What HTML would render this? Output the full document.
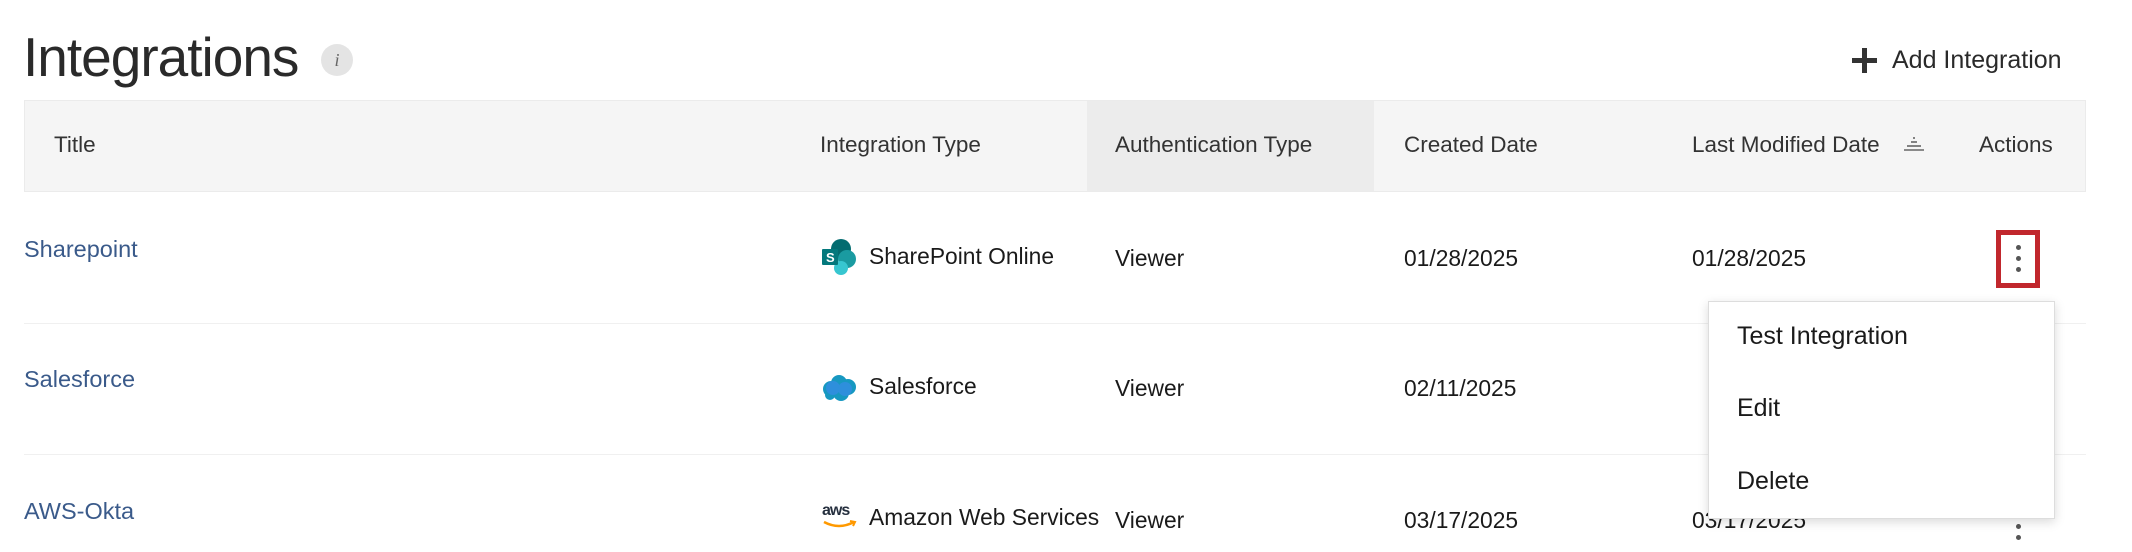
<!DOCTYPE html>
<html><head><meta charset="utf-8"><style>
*{margin:0;padding:0;box-sizing:border-box}
body{width:2132px;height:552px;background:#fff;font-family:"Liberation Sans",sans-serif;color:#222;position:relative;overflow:hidden}
.a{position:absolute;white-space:nowrap}
.h{font-size:22.5px;color:#333;top:132px}
.c{font-size:22.8px;color:#1a1a1a}
.l{font-size:23.5px;color:#3a5a8a}
.m{font-size:25px;color:#1a1a1a;left:1737px}
</style></head><body>
<div class="a" style="left:23px;top:25px;font-size:55px;color:#2a2a2a;letter-spacing:-1px">Integrations</div>
<div class="a" style="left:321px;top:44px;width:32px;height:32px;border-radius:50%;background:#e4e4e4;color:#666;font:italic 18px 'Liberation Serif',serif;text-align:center;line-height:32px">i</div>
<div class="a" style="left:1852px;top:58px;width:25px;height:5px;background:#333"></div>
<div class="a" style="left:1862px;top:48px;width:5px;height:25px;background:#333"></div>
<div class="a" style="left:1892px;top:46px;font-size:25px;color:#2a2a2a">Add Integration</div>

<div class="a" style="left:24px;top:100px;width:2062px;height:92px;background:#f5f5f5;border:1px solid #ebebeb"></div>
<div class="a" style="left:1087px;top:101px;width:287px;height:90px;background:#ececec"></div>
<div class="a h" style="left:54px">Title</div>
<div class="a h" style="left:820px">Integration Type</div>
<div class="a h" style="left:1115px">Authentication Type</div>
<div class="a h" style="left:1404px">Created Date</div>
<div class="a h" style="left:1692px">Last Modified Date</div>
<svg class="a" style="left:1902px;top:135px" width="24" height="20"><g stroke="#666" stroke-width="1.6"><line x1="11" y1="3" x2="13" y2="3"/><line x1="9" y1="7" x2="15" y2="7"/><line x1="5" y1="11" x2="19" y2="11"/><line x1="2" y1="15" x2="22" y2="15"/></g></svg>
<div class="a h" style="left:1979px">Actions</div>

<div class="a" style="left:24px;top:323px;width:2062px;height:1px;background:#f0f0f0"></div>
<div class="a" style="left:24px;top:454px;width:2062px;height:1px;background:#f0f0f0"></div>

<div class="a l" style="left:24px;top:236px">Sharepoint</div>
<div class="a l" style="left:24px;top:366px">Salesforce</div>
<div class="a l" style="left:24px;top:498px">AWS-Okta</div>

<svg class="a" style="left:821px;top:238px" width="38" height="38"><circle cx="20" cy="11" r="10" fill="#036c70"/><circle cx="26" cy="21" r="9" fill="#1a9ba1"/><circle cx="20" cy="30" r="7" fill="#37c6d0"/><rect x="1" y="11" width="16" height="16" rx="1" fill="#03787c"/><text x="5" y="24" font-size="13" font-weight="bold" fill="#fff" font-family="Liberation Sans">S</text></svg>
<div class="a c" style="left:869px;top:243px">SharePoint Online</div>
<svg class="a" style="left:821px;top:373px" width="38" height="30"><g fill="#1798c1"><circle cx="10" cy="16" r="8"/><circle cx="18" cy="10" r="8"/><circle cx="27" cy="14" r="8"/><circle cx="20" cy="20" r="8"/><circle cx="9" cy="22" r="5"/></g><g fill="#2e8fdc"><circle cx="12" cy="15" r="7"/><circle cx="24" cy="16" r="7"/></g></svg>
<div class="a c" style="left:869px;top:373px">Salesforce</div>
<div class="a" style="left:822px;top:502px;font-size:16px;font-weight:bold;color:#252f3e;letter-spacing:-1px">aws</div>
<svg class="a" style="left:822px;top:520px" width="36" height="10"><path d="M2 2 Q17 10 32 2" stroke="#ff9900" stroke-width="2.5" fill="none"/><path d="M28 1 L33 2 L31 6" stroke="#ff9900" stroke-width="2" fill="none"/></svg>
<div class="a c" style="left:869px;top:504px">Amazon Web Services</div>

<div class="a c" style="left:1115px;top:245px">Viewer</div>
<div class="a c" style="left:1115px;top:375px">Viewer</div>
<div class="a c" style="left:1115px;top:507px">Viewer</div>
<div class="a c" style="left:1404px;top:245px">01/28/2025</div>
<div class="a c" style="left:1404px;top:375px">02/11/2025</div>
<div class="a c" style="left:1404px;top:507px">03/17/2025</div>
<div class="a c" style="left:1692px;top:245px">01/28/2025</div>
<div class="a c" style="left:1692px;top:507px">03/17/2025</div>

<div class="a" style="left:1996px;top:230px;width:44px;height:58px;border:5px solid #c1272d"></div>
<div class="a" style="left:2016px;top:245px;width:5px;height:5px;border-radius:50%;background:#555"></div>
<div class="a" style="left:2016px;top:256px;width:5px;height:5px;border-radius:50%;background:#555"></div>
<div class="a" style="left:2016px;top:267px;width:5px;height:5px;border-radius:50%;background:#555"></div>
<div class="a" style="left:2016px;top:524px;width:5px;height:5px;border-radius:50%;background:#555"></div>
<div class="a" style="left:2016px;top:535px;width:5px;height:5px;border-radius:50%;background:#555"></div>

<div class="a" style="left:1708px;top:301px;width:347px;height:218px;background:#fff;border:1px solid #ddd;box-shadow:0 3px 10px rgba(0,0,0,0.15)"></div>
<div class="a m" style="top:322px">Test Integration</div>
<div class="a m" style="top:394px">Edit</div>
<div class="a m" style="top:467px">Delete</div>
</body></html>
